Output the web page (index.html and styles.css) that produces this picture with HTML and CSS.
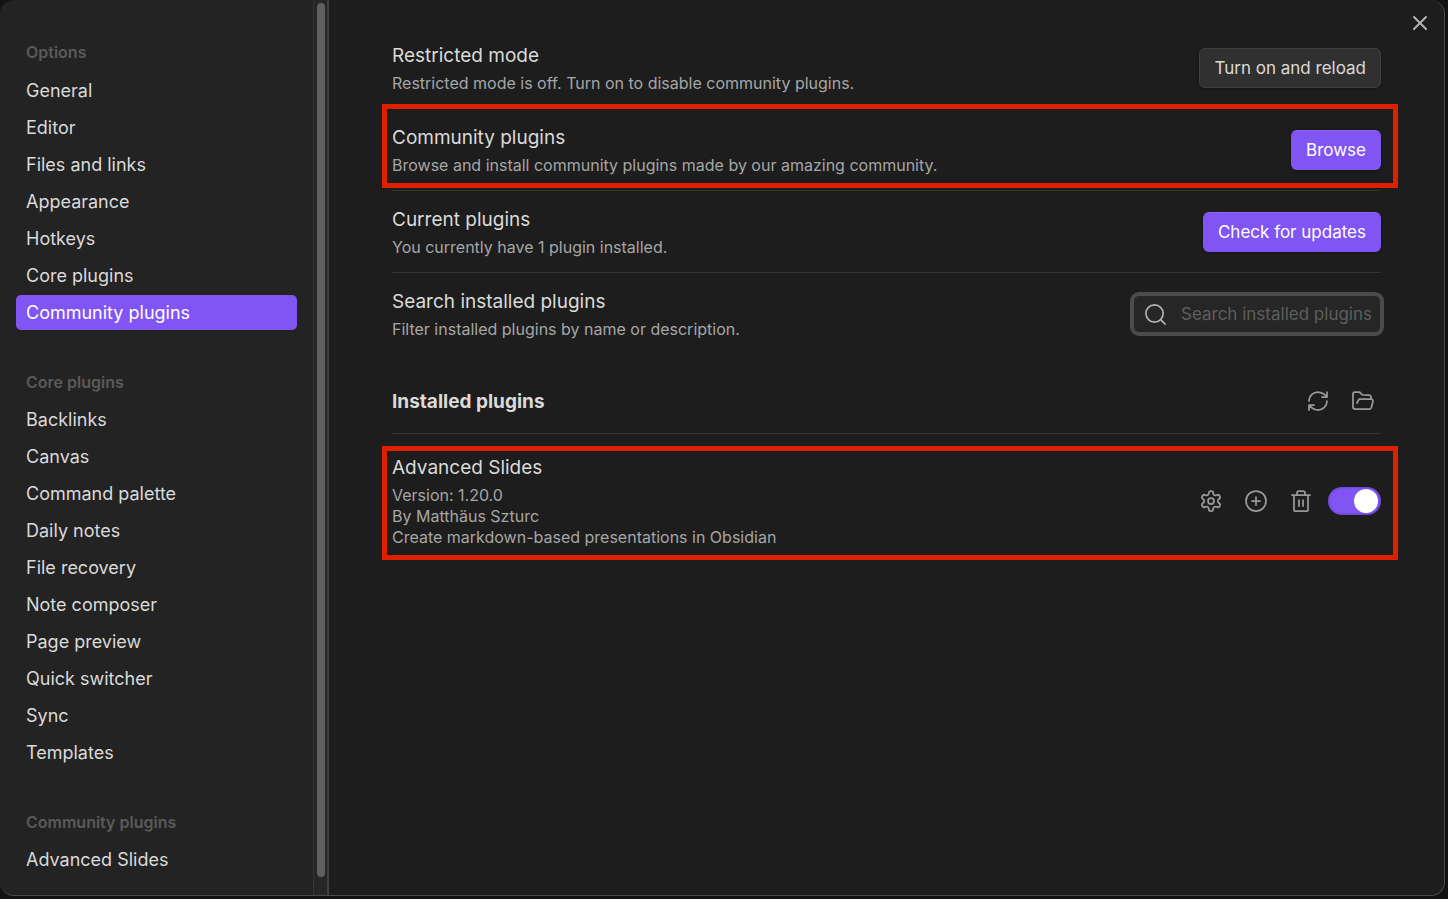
FILE: index.html
```html
<!DOCTYPE html>
<html lang="en">
<head>
<meta charset="utf-8">
<title>Settings</title>
<link rel="stylesheet" href="styles.css">
</head>
<body>
<div class="modal">
  <nav class="sidebar" aria-label="Settings">
    <div class="sidebar-list">
      <section class="group">
        <h2 class="group-title">Options</h2>
        <a class="nav-item" href="#">General</a>
        <a class="nav-item" href="#">Editor</a>
        <a class="nav-item" href="#">Files and links</a>
        <a class="nav-item" href="#">Appearance</a>
        <a class="nav-item" href="#">Hotkeys</a>
        <a class="nav-item" href="#">Core plugins</a>
        <a class="nav-item is-active" href="#" aria-current="page">Community plugins</a>
      </section>
      <section class="group">
        <h2 class="group-title">Core plugins</h2>
        <a class="nav-item" href="#">Backlinks</a>
        <a class="nav-item" href="#">Canvas</a>
        <a class="nav-item" href="#">Command palette</a>
        <a class="nav-item" href="#">Daily notes</a>
        <a class="nav-item" href="#">File recovery</a>
        <a class="nav-item" href="#">Note composer</a>
        <a class="nav-item" href="#">Page preview</a>
        <a class="nav-item" href="#">Quick switcher</a>
        <a class="nav-item" href="#">Sync</a>
        <a class="nav-item" href="#">Templates</a>
      </section>
      <section class="group">
        <h2 class="group-title">Community plugins</h2>
        <a class="nav-item" href="#">Advanced Slides</a>
      </section>
    </div>
    <div class="scroll-track" aria-hidden="true"><div class="scroll-thumb"></div></div>
  </nav>

  <main class="content">
    <button class="close" aria-label="Close">
      <svg viewBox="0 0 24 24"><path d="M18 6 6 18M6 6l12 12"/></svg>
    </button>

    <div class="setting">
      <div class="info">
        <h3 class="name">Restricted mode</h3>
        <p class="desc">Restricted mode is off. Turn on to disable community plugins.</p>
      </div>
      <button class="btn">Turn on and reload</button>
    </div>

    <div class="setting marked">
      <div class="info">
        <h3 class="name">Community plugins</h3>
        <p class="desc">Browse and install community plugins made by our amazing community.</p>
      </div>
      <button class="btn cta">Browse</button>
    </div>

    <div class="setting">
      <div class="info">
        <h3 class="name">Current plugins</h3>
        <p class="desc">You currently have 1 plugin installed.</p>
      </div>
      <button class="btn cta">Check for updates</button>
    </div>

    <div class="setting">
      <div class="info">
        <h3 class="name"><label for="search">Search installed plugins</label></h3>
        <p class="desc">Filter installed plugins by name or description.</p>
      </div>
      <div class="search">
        <svg class="search-icon" viewBox="0 0 24 24"><circle cx="11" cy="11" r="9"/><path d="m22 22-4.6-4.6"/></svg>
        <input class="search-input" id="search" type="text" placeholder="Search installed plugins">
      </div>
    </div>

    <div class="heading">
      <h2 class="heading-title">Installed plugins</h2>
      <div class="controls">
        <button class="icon-btn" aria-label="Reload plugins">
          <svg viewBox="0 0 24 24"><path d="M3 12a9 9 0 0 1 9-9 9.75 9.75 0 0 1 6.74 2.74L21 8M21 3v5h-5M21 12a9 9 0 0 1-9 9 9.75 9.75 0 0 1-6.74-2.74L3 16M8 16H3v5"/></svg>
        </button>
        <button class="icon-btn" aria-label="Open plugins folder">
          <svg viewBox="0 0 24 24"><path d="m6 14 1.45-2.9A2 2 0 0 1 9.24 10H20a2 2 0 0 1 1.94 2.5l-1.55 6a2 2 0 0 1-1.94 1.5H4a2 2 0 0 1-2-2V5c0-1.1.9-2 2-2h3.93a2 2 0 0 1 1.66.9l.82 1.2a2 2 0 0 0 1.66.9H18a2 2 0 0 1 2 2v2"/></svg>
        </button>
      </div>
    </div>

    <div class="setting plugin marked">
      <div class="info">
        <h3 class="name">Advanced Slides</h3>
        <p class="desc">Version: 1.20.0</p>
        <p class="desc">By Matthäus Szturc</p>
        <p class="desc">Create markdown-based presentations in Obsidian</p>
      </div>
      <div class="controls">
        <button class="icon-btn" aria-label="Options">
          <svg viewBox="0 0 24 24"><path d="M12.22 2h-.44a2 2 0 0 0-2 2v.18a2 2 0 0 1-1 1.73l-.43.25a2 2 0 0 1-2 0l-.15-.08a2 2 0 0 0-2.73.73l-.22.38a2 2 0 0 0 .73 2.73l.15.1a2 2 0 0 1 1 1.72v.51a2 2 0 0 1-1 1.74l-.15.09a2 2 0 0 0-.73 2.73l.22.38a2 2 0 0 0 2.73.73l.15-.08a2 2 0 0 1 2 0l.43.25a2 2 0 0 1 1 1.73V20a2 2 0 0 0 2 2h.44a2 2 0 0 0 2-2v-.18a2 2 0 0 1 1-1.73l.43-.25a2 2 0 0 1 2 0l.15.08a2 2 0 0 0 2.73-.73l.22-.39a2 2 0 0 0-.73-2.73l-.15-.08a2 2 0 0 1-1-1.74v-.5a2 2 0 0 1 1-1.74l.15-.09a2 2 0 0 0 .73-2.73l-.22-.38a2 2 0 0 0-2.73-.73l-.15.08a2 2 0 0 1-2 0l-.43-.25a2 2 0 0 1-1-1.73V4a2 2 0 0 0-2-2z"/><circle cx="12" cy="12" r="3"/></svg>
        </button>
        <button class="icon-btn" aria-label="Hotkeys">
          <svg viewBox="0 0 24 24"><circle cx="12" cy="12" r="10"/><path d="M8 12h8M12 8v8"/></svg>
        </button>
        <button class="icon-btn" aria-label="Uninstall">
          <svg viewBox="0 0 24 24"><path d="M3 6h18M19 6v15a1 1 0 0 1-1 1H6a1 1 0 0 1-1-1V6M8 6V4a2 2 0 0 1 2-2h4a2 2 0 0 1 2 2v2M10 11v6M14 11v6"/></svg>
        </button>
        <input class="toggle" type="checkbox" checked aria-label="Enable Advanced Slides">
      </div>
    </div>
  </main>
</div>
</body>
</html>
```
FILE: styles.css
```css
* {
  box-sizing: border-box;
}

body {
  margin: 0;
  min-height: 100vh;
  display: flex;
  padding: 0 3px 3px 0;
  background: #121212;
  color: #dadada;
  font-family: Inter, "Liberation Sans", sans-serif;
}

h2, h3, p {
  margin: 0;
}

button, input {
  font-family: inherit;
}

svg {
  display: block;
  fill: none;
  stroke: currentColor;
  stroke-width: 1.75;
  stroke-linecap: round;
  stroke-linejoin: round;
}

.modal {
  flex: 1;
  display: flex;
  overflow: hidden;
  border: 1px solid #4a4a4a;
  border-width: 0 1px 1px 0;
  border-radius: 14px;
  background: #1d1d1d;
}

.sidebar {
  flex: none;
  display: flex;
  border-right: 2px solid #3f3f3f;
  background: #232323;
}

.sidebar-list {
  width: 313px;
  display: flex;
  flex-direction: column;
  gap: 35px;
  padding: 34px 16px 16px;
}

.group {
  display: flex;
  flex-direction: column;
  gap: 2px;
}

.group-title {
  padding: 0 10px;
  color: #5a5a5a;
  font-size: 16px;
  font-weight: 600;
  line-height: 37px;
}

.group + .group .group-title {
  line-height: 35px;
}

.nav-item {
  padding: 0 10px;
  border-radius: 5px;
  color: #dadada;
  font-size: 18px;
  line-height: 35px;
  text-decoration: none;
}

.nav-item.is-active {
  background: #8055f3;
  color: #fff;
}

.scroll-track {
  width: 14px;
  display: flex;
  padding: 3px 2px 18px 3px;
  border-left: 1px solid #363636;
  background: #262626;
}

.scroll-thumb {
  width: 8px;
  border-radius: 4px;
  background: #616161;
}

.content {
  flex: 1;
  position: relative;
  padding: 26px 63px 26px 63px;
}

.close {
  position: absolute;
  top: 11px;
  right: 12px;
  padding: 0;
  border: 0;
  background: none;
  color: #b3b3b3;
}

.close svg {
  width: 24px;
  height: 24px;
  stroke-width: 2;
}

.setting {
  position: relative;
  display: flex;
  align-items: center;
  justify-content: space-between;
  gap: 16px;
  padding: 15px 0 14px;
  border-top: 1px solid #333;
}

.setting:first-of-type {
  border-top-color: transparent;
}

.plugin {
  padding: 20px 0 16px;
}

.marked::after {
  content: "";
  position: absolute;
  inset: -5px -17px 2px -10px;
  border: 5px solid #de1f00;
  pointer-events: none;
}

.plugin.marked::after {
  inset: 12px -17px 4px -10px;
}

.name {
  margin-bottom: 3px;
  font-size: 19px;
  font-weight: 400;
  line-height: 28px;
}

.desc {
  color: #a6a6a6;
  font-size: 16px;
  line-height: 21px;
}

.btn {
  height: 40px;
  padding: 0 14px;
  border: 1px solid #404040;
  border-radius: 6px;
  background: #303030;
  box-shadow: 0 1px 3px rgba(0, 0, 0, 0.3);
  color: #dadada;
  font-size: 17px;
}

.btn.cta {
  border-color: #8055f3;
  border-top-color: #8e68f5;
  background: #8055f3;
  color: #fff;
}

.search {
  position: relative;
  width: 248px;
}

.search-icon {
  position: absolute;
  top: 8px;
  left: 11px;
  width: 23px;
  height: 23px;
  color: #b3b3b3;
}

.search-input {
  display: block;
  width: 100%;
  height: 38px;
  padding: 0 9px 0 47px;
  border: 1px solid #4c4c4c;
  border-radius: 6px;
  outline: 0;
  background: #262626;
  box-shadow: 0 0 0 3px #4c4c4c;
  color: #dadada;
  font-size: 17px;
}

.search-input::placeholder {
  color: #5e5e5e;
}

.heading {
  display: flex;
  align-items: center;
  justify-content: space-between;
  padding: 31px 0 16px;
}

.heading-title {
  font-size: 19px;
  font-weight: 700;
}

.controls {
  display: flex;
  align-items: center;
  gap: 9px;
}

.icon-btn {
  width: 36px;
  height: 32px;
  padding: 0;
  display: grid;
  place-items: center;
  border: 0;
  background: none;
  color: #999;
}

.icon-btn svg {
  width: 24px;
  height: 24px;
}

.toggle {
  appearance: none;
  width: 53px;
  height: 28px;
  margin: 0;
  padding: 2px 3px;
  display: flex;
  justify-content: flex-end;
  border-radius: 14px;
  background: #8055f3;
  box-shadow: inset 0 0 3px rgba(0, 0, 0, 0.35);
}

.toggle::before {
  content: "";
  width: 24px;
  height: 24px;
  border-radius: 50%;
  background: #fff;
}

.toggle:not(:checked) {
  justify-content: flex-start;
  background: #404040;
}
```
